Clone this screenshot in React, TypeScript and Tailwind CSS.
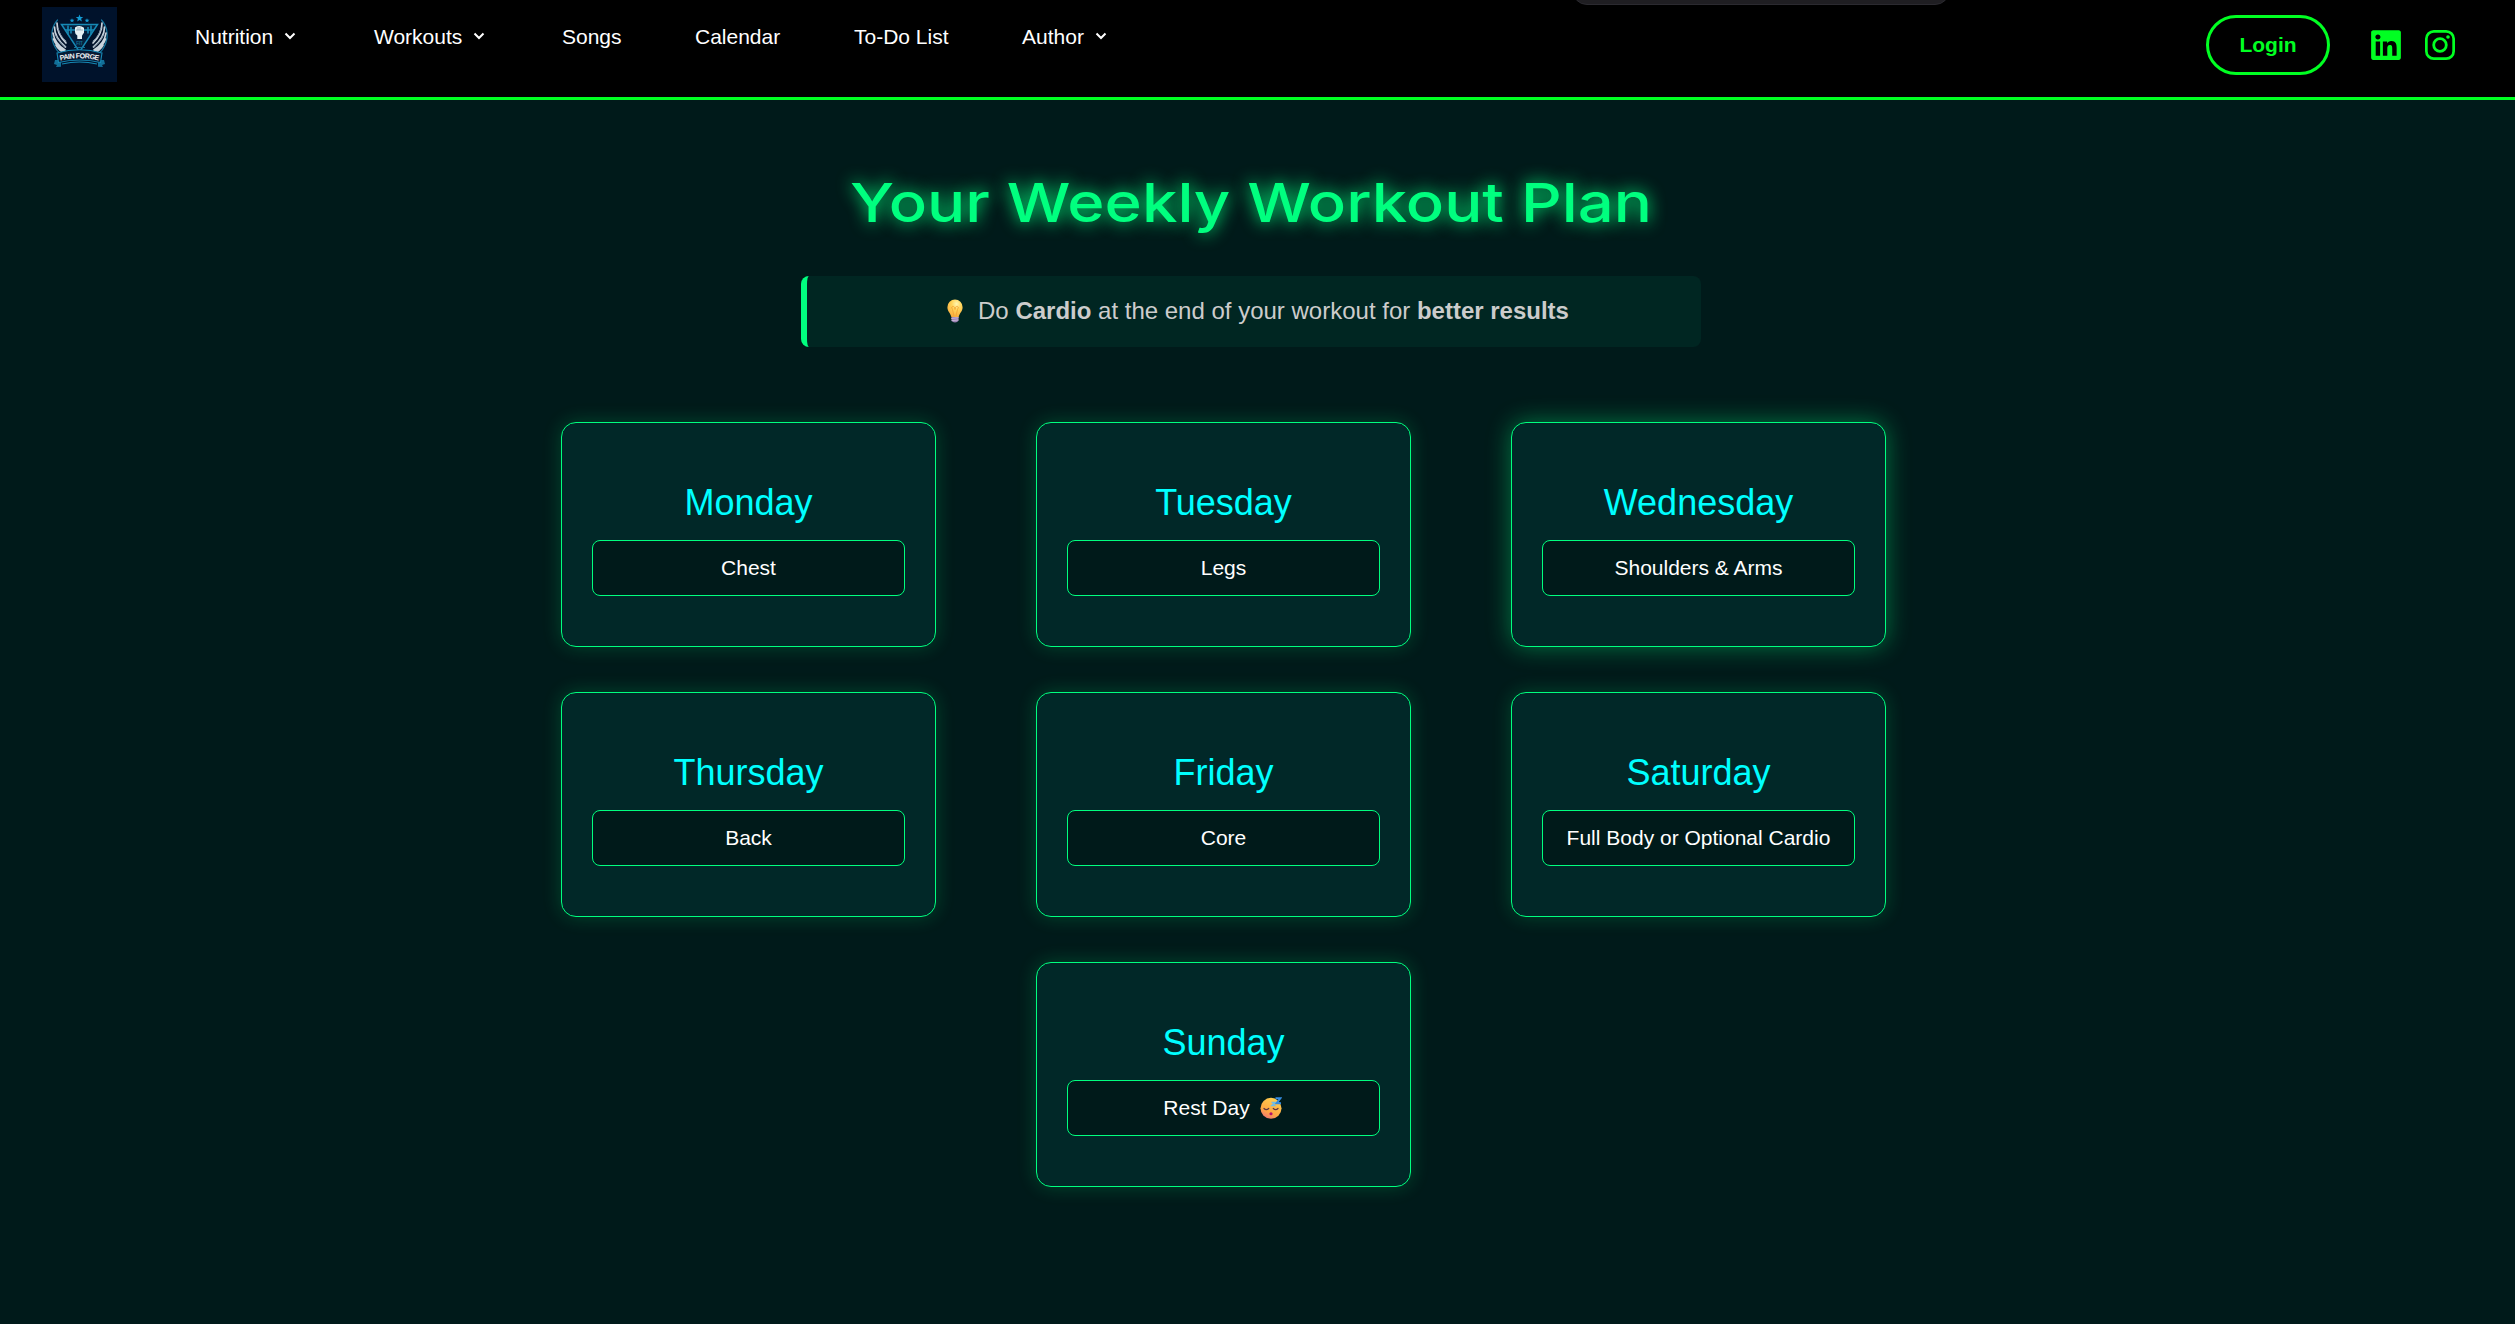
import React from "react";
import { FaLinkedin } from "react-icons/fa";

const stroke = "#00ff22";

type NavEntry = { label: string; menu?: boolean; box: string };

const nav: NavEntry[] = [
  { label: "Nutrition", menu: true, box: "w-[179px]" },
  { label: "Workouts", menu: true, box: "w-[188px]" },
  { label: "Songs", box: "w-[133px]" },
  { label: "Calendar", box: "w-[159px]" },
  { label: "To-Do List", box: "w-[168px]" },
  { label: "Author", menu: true, box: "w-[100px]" },
];

type Day = { day: string; plan: string; glow?: boolean; place?: string; sleepy?: boolean };

const days: Day[] = [
  { day: "Monday", plan: "Chest" },
  { day: "Tuesday", plan: "Legs" },
  { day: "Wednesday", plan: "Shoulders & Arms", glow: true },
  { day: "Thursday", plan: "Back" },
  { day: "Friday", plan: "Core" },
  { day: "Saturday", plan: "Full Body or Optional Cardio" },
  { day: "Sunday", plan: "Rest Day", place: "col-start-2", sleepy: true },
];

function Wing() {
  return (
    <g fill="none" strokeLinecap="round">
      <path d="M15.500 13C9 20 8 31 13 40c2 4 6 8 11 9" stroke="#14779f" strokeWidth="1.2" />
      <path d="M15 16c0 8 4 15 9 20M12.500 20c0 8 5 15 11 20M11 26c1 7 6 13 12 17M11.500 32c2 6 7 10 12 13M14 38c2 4 6 7 11 9" stroke="#c9d3dc" strokeWidth="1.7" />
      <path d="M16 21c1 5 4 10 8 13M13.500 28c2 5 6 9 10 12" stroke="#7c93a5" strokeWidth="1" />
    </g>
  );
}

function Logo() {
  return (
    <svg viewBox="0 0 75 75" className="size-[75px] shrink-0 bg-[#00122b]" aria-label="Pain Forge">
      <g fill="#139bd2">
        <path d="M37.500 7.500l1 2.500 2.700.1-2.100 1.700.8 2.600-2.400-1.500-2.300 1.500.7-2.600-2.100-1.700 2.700-.1z" />
        <path d="M30 11.200l.7 1.500 1.700.1-1.300 1.100.4 1.700-1.500-1-1.500 1 .5-1.700-1.300-1.100 1.600-.1z" />
        <path d="M45 11.200l.7 1.500 1.700.1-1.300 1.100.4 1.700-1.500-1-1.500 1 .5-1.700-1.300-1.100 1.600-.1z" />
      </g>
      <Wing />
      <g transform="translate(75 0) scale(-1 1)"><Wing /></g>
      <path d="M19.500 17.500h36L37.500 45z" fill="#04203d" stroke="#1689b5" strokeWidth="1.500" />
      <path d="M23 23h29M26 18.500v9M29 20v6.500M46 20v6.500M49 18.500v9" stroke="#1689b5" strokeWidth="1.600" />
      <path d="M33 20.500q4.500-3 9 .2v5q-1.200 1.500-2 3V32h-4.700v-3.500q-2.300-1.500-2.300-3.500z" fill="#e5f1f4" />
      <path d="M34 23h7M36 20v3M38 20v3" stroke="#718c9b" strokeWidth=".6" />
      <text x="37.500" y="38" textAnchor="middle" fontFamily="Liberation Sans" fontWeight="700" fontSize="4.500" fill="#147198">FIT</text>
      <path d="M32 40.500h11" stroke="#147198" strokeWidth="1" />
      <path d="M13 53l-1 4 3 1-1 2 5-.2V53zM62 53l1 4-3 1 1 2-5-.2V53z" fill="#126f98" />
      <path d="M15 46q22.500-6.500 45 0l-1.500 9.500q-21-5-42 0z" fill="#061b35" stroke="#1689b5" strokeWidth="1.100" />
      <path d="M20 57q17.500-4 35 0" stroke="#1689b5" strokeWidth="1.200" fill="none" />
      <path id="ribbon" d="M16.500 54q21-5.500 42 0" fill="none" />
      <text fontFamily="Liberation Sans" fontWeight="700" fontSize="7.200" fill="#f0f2f4">
        <textPath href="#ribbon" startOffset="50%" textAnchor="middle" textLength="39">PAIN FORGE</textPath>
      </text>
    </svg>
  );
}

function Chevron() {
  return (
    <svg viewBox="0 0 12 9" className="mt-[9px] ml-[11px] h-[9px] w-[12px]" fill="none" stroke="white" strokeWidth="2">
      <path d="M1.500 1.500L6 6l4.500-4.500" />
    </svg>
  );
}

function Instagram() {
  return (
    <svg viewBox="0 0 30 30" className="size-[30px]" fill="none" stroke={stroke}>
      <rect x="1.350" y="1.350" width="27.300" height="27.300" rx="7.500" strokeWidth="2.700" />
      <circle cx="15" cy="15" r="6.300" strokeWidth="2.800" />
      <circle cx="23" cy="7" r="1.800" fill={stroke} stroke="none" />
    </svg>
  );
}

function Bulb() {
  return (
    <svg viewBox="0 0 18 24" className="mr-[14px] h-[24px] w-[18px]">
      <defs>
        <radialGradient id="glass" cx=".6" cy=".25" r=".8">
          <stop offset="0" stopColor="#fff6b0" />
          <stop offset=".4" stopColor="#ffd45a" />
          <stop offset="1" stopColor="#f7a93b" />
        </radialGradient>
      </defs>
      <path d="M9 .5a7.600 7.600 0 0 0-7.600 7.700c0 4.300 3.200 5.600 4 10h7.200c.8-4.400 4-5.700 4-10A7.600 7.600 0 0 0 9 .5z" fill="url(#glass)" />
      <path d="M8 17l-1.500-6.500q-2-3.500 1-3 1.500.5 1.500 3 0-2.500 1.500-3 3-.5 1 3L10 17" fill="none" stroke="#f3a034" strokeWidth=".8" />
      <path d="M5.500 18h7v3.500q-1 2-3.500 2t-3.500-2z" fill="#9c83b5" />
      <path d="M5.200 19.500l7.500-.8M5.500 21.700l7-.8" stroke="#d4c2df" strokeWidth=".8" />
    </svg>
  );
}

function SleepyFace() {
  return (
    <svg viewBox="0 0 22 22" className="mr-[2px] ml-[10px] size-[22px]">
      <defs>
        <linearGradient id="face" x1=".7" y1="0" x2=".2" y2="1">
          <stop offset="0" stopColor="#ffd04f" />
          <stop offset=".65" stopColor="#ffa743" />
          <stop offset="1" stopColor="#ed6f79" />
        </linearGradient>
      </defs>
      <circle cx="11" cy="11.300" r="10.500" fill="url(#face)" />
      <path d="M4 11.500q2.300 2.300 4.700 0M13.300 11.500q2.400 2.300 4.700 0" fill="none" stroke="#5d3543" strokeWidth="1.200" strokeLinecap="round" />
      <ellipse cx="11" cy="16.700" rx="1.600" ry="1.500" fill="#b5136c" />
      <path d="M11.500 5.500h3.500L12 8.500h3.500" fill="none" stroke="#6fbde8" strokeWidth="1.600" />
      <path d="M15.500 1.200h5L16.500 6.300h4.500" fill="none" stroke="#348be0" strokeWidth="1.900" />
    </svg>
  );
}

function DayCard({ item }: { item: Day }) {
  const glow = item.glow
    ? "shadow-[0_0_25px_rgba(0,255,127,0.4)]"
    : "shadow-[0_0_19px_rgba(0,255,127,0.2)]";
  return (
    <section className={`flex h-[225px] flex-col items-center rounded-[15px] border border-[#00ff7f] bg-[#012828] px-[30px] pt-[59px] ${glow} ${item.place ?? ""}`}>
      <h2 className="text-[36px] leading-[42px] text-[#00ffff]">{item.day}</h2>
      <div className="mt-[16px] flex h-[56px] w-full items-center justify-center rounded-[8px] border border-[#00ff7f] bg-[#001a1a] text-[21px] whitespace-nowrap text-white">
        {item.plan}
        {item.sleepy && <SleepyFace />}
      </div>
    </section>
  );
}

export default function App() {
  return (
    <div className="relative h-[1324px] w-full overflow-hidden bg-[#001a1a] font-['Liberation_Sans',Arial,sans-serif]">
      <header className="flex h-[100px] items-start border-b-[3px] border-[#00ff22] bg-black pt-[7px] pl-[42px]">
        <Logo />
        <nav className="flex pt-[16px] pl-[78px] text-[21px] leading-[28px] text-white">
          {nav.map((n) => (
            <div key={n.label} className={`flex ${n.box}`}>
              <span className="whitespace-nowrap">{n.label}</span>
              {n.menu && <Chevron />}
            </div>
          ))}
        </nav>
        <div className="mt-[8px] mr-[60px] ml-auto flex items-center">
          <button className="h-[60px] w-[124px] rounded-full border-[3px] border-[#00ff22] text-[21px] font-bold text-[#00ff22]">Login</button>
          <FaLinkedin className="ml-[39px] size-[34px] text-[#00ff22]" />
          <span className="ml-[22px]"><Instagram /></span>
        </div>
      </header>
      <div className="absolute -top-[25px] left-[1572px] h-[30px] w-[378px] rounded-[15px] border border-[#2b2a30] bg-[#1f1e22]" />
      <main className="w-[2502px]">
        <h1 className="mt-[67px] h-[72px] origin-center scale-x-[1.176] text-center font-['Inter',sans-serif] text-[54px] leading-[72px] font-medium whitespace-nowrap text-[#00ff7f] [text-shadow:0_0_16px_#00ff7f]">
          Your Weekly Workout Plan
        </h1>
        <div className="mx-auto mt-[37px] flex h-[71px] w-[900px] items-center justify-center rounded-[8px] border-l-[6px] border-[#00ff7f] bg-[#002622] pb-[2px] pl-[7px] text-[24px] text-[#cccccc]">
          <Bulb />
          <p className="whitespace-nowrap">
            Do <strong>Cardio</strong> at the end of your workout for <strong>better results</strong>
          </p>
        </div>
        <div className="mt-[75px] ml-[561px] grid w-[1325px] grid-cols-3 gap-x-[100px] gap-y-[45px]">
          {days.map((d) => (
            <DayCard key={d.day} item={d} />
          ))}
        </div>
      </main>
    </div>
  );
}
